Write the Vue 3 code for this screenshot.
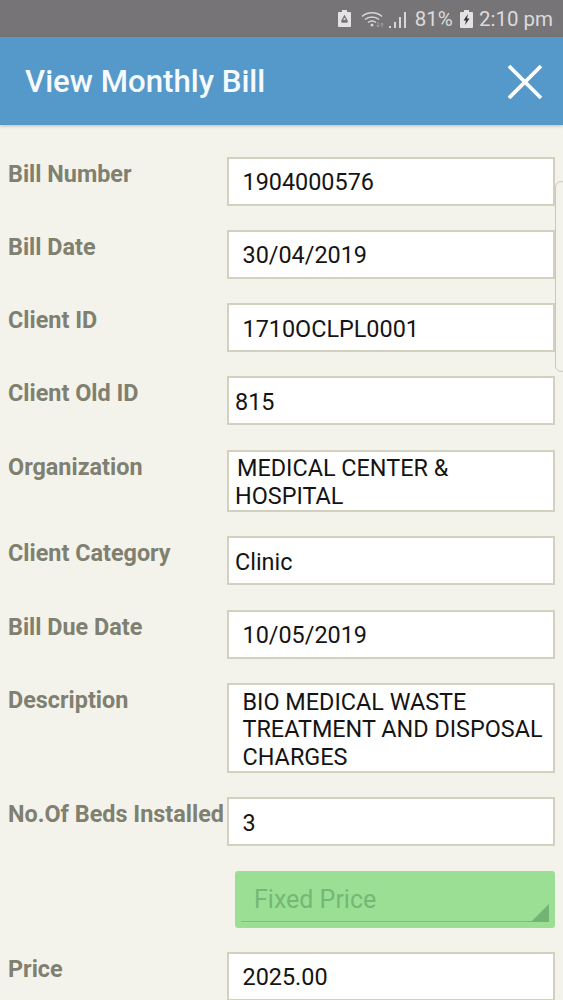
<script setup>
const rows = [
  { label: 'Bill Number', lines: ['1904000576'], pad: 'wide' },
  { label: 'Bill Date', lines: ['30/04/2019'], pad: 'wide' },
  { label: 'Client ID', lines: ['1710OCLPL0001'], pad: 'wide' },
  { label: 'Client Old ID', lines: ['815'], pad: 'narrow' },
  { label: 'Organization', lines: ['MEDICAL CENTER &', 'HOSPITAL'], pad: 'org' },
  { label: 'Client Category', lines: ['Clinic'], pad: 'narrow' },
  { label: 'Bill Due Date', lines: ['10/05/2019'], pad: 'wide' },
  { label: 'Description', lines: ['BIO MEDICAL WASTE', 'TREATMENT AND DISPOSAL', 'CHARGES'], pad: 'wide' },
  { label: 'No.Of Beds Installed', lines: ['3'], pad: 'wide' },
  { kind: 'select', label: '', lines: ['Fixed Price'] },
  { label: 'Price', lines: ['2025.00'], pad: 'wide' }
]
</script>

<template>
  <div class="screen">
    <div class="status">
      <svg class="ic-batt" viewBox="0 0 13 17" width="13" height="17">
        <path d="M4 0h5v2h3a1 1 0 0 1 1 1v13a1 1 0 0 1-1 1H1a1 1 0 0 1-1-1V3a1 1 0 0 1 1-1h3z" fill="#e4e3e4" />
        <path d="M6.500 6 4 10.500h5zM3.500 12h6" fill="none" stroke="#767476" stroke-width="1.300" />
      </svg>
      <svg class="ic-wifi" viewBox="0 0 24 18" width="24" height="18">
        <path d="M1 6.500C6 1.500 16 1.500 21 6.500M4 9.500C8 6 14 6 18 9.500M7 12.500C9.500 10.500 12.500 10.500 15 12.500" fill="none" stroke="#d8d7d8" stroke-width="1.500" />
        <circle cx="11" cy="15" r="1.500" fill="#d8d7d8" />
        <path d="M17 12v5M15.500 15.500 17 17l1.500-1.500M21 17v-4M19.800 14.500 21 13l1.200 1.500" fill="none" stroke="#a3a2a3" stroke-width="1" />
      </svg>
      <svg class="ic-signal" viewBox="0 0 18 17" width="18" height="17">
        <path d="M0 17v-2h2v2zM5 17v-6h2v6zM10 17V6h2v11zM15 17V1h2v16z" fill="#d8d7d8" />
      </svg>
      <span class="pct">81%</span>
      <svg class="ic-charge" viewBox="0 0 13 18" width="13" height="18">
        <path d="M4 0h5v2h3a1 1 0 0 1 1 1v14a1 1 0 0 1-1 1H1a1 1 0 0 1-1-1V3a1 1 0 0 1 1-1h3z" fill="#e4e3e4" />
        <path d="M8 4 3.500 10.500h2.500L5 15l4.500-6.500H7z" fill="#333" />
      </svg>
      <span class="time">2:10 pm</span>
    </div>

    <header class="bar">
      <h1 class="title">View Monthly Bill</h1>
      <svg class="close" viewBox="0 0 36 36" width="36" height="36">
        <path d="M2 2 34 34M34 2 2 34" stroke="#fff" stroke-width="3.800" fill="none" />
      </svg>
    </header>

    <main class="form">
      <div v-for="row in rows" :key="row.label + row.lines[0]" class="row">
        <label class="label">{{ row.label }}</label>
        <div v-if="row.kind === 'select'" class="select">
          <span class="select-text">{{ row.lines[0] }}</span>
          <span class="select-line"></span>
          <span class="select-arrow"></span>
        </div>
        <div v-else class="field" :class="row.pad">
          <span v-for="line in row.lines" :key="line" class="line">{{ line }}</span>
        </div>
      </div>
    </main>

    <div class="handle"></div>
  </div>
</template>

<style scoped>
.screen {
  position: relative;
  width: 563px;
  height: 1000px;
  overflow: hidden;
  background: #f4f3eb;
  font-family: Roboto, "Liberation Sans", sans-serif;
}
.status {
  height: 37px;
  background: #767476;
  display: flex;
  align-items: center;
  padding-right: 10px;
  justify-content: flex-end;
  color: #dcdbdc;
  font-size: 20.500px;
  box-sizing: border-box;
}
.ic-batt { margin-right: 10px; }
.ic-wifi { margin-right: 4px; }
.ic-signal { margin-right: 8px; margin-top: 2px; }
.pct { margin-right: 7px; }
.ic-charge { margin-right: 6px; }
.bar {
  height: 88px;
  background: #5598ca;
  display: flex;
  align-items: center;
  justify-content: space-between;
  padding: 1px 20px 0 25px;
  box-sizing: border-box;
  box-shadow: 0 1px 3px rgba(90, 90, 70, 0.35);
  position: relative;
}
.title {
  margin: 0;
  font-size: 31.200px;
  font-weight: 500;
  color: #f6fafd;
}
.form {
  padding: 31.500px 8px 0;
  display: flex;
  flex-direction: column;
  gap: 24.300px;
}
.row {
  display: flex;
  align-items: flex-start;
}
.label {
  width: 219px;
  flex: none;
  padding-top: 4px;
  font-size: 23.400px;
  line-height: 27px;
  font-weight: 700;
  color: #7f8070;
  white-space: nowrap;
}
.field {
  width: 328px;
  flex: none;
  box-sizing: border-box;
  min-height: 49px;
  background: #fff;
  border: 2px solid #d2d1bf;
  font-size: 23.400px;
  line-height: 27.500px;
  color: #141414;
  padding-top: 3.500px;
  display: flex;
  flex-direction: column;
  justify-content: center;
}
.line { white-space: nowrap; display: block; }
.field.wide { padding-left: 13.500px; }
.field.narrow { padding-left: 6px; }
.field.org { padding-left: 6px; }
.field.org .line:first-child { margin-left: 2px; }
.select {
  position: relative;
  margin-left: 8px;
  width: 320px;
  height: 57px;
  flex: none;
  box-sizing: border-box;
  background: #9bdf94;
  border-radius: 3px;
  padding: 15px 0 0 19px;
}
.select-text {
  font-size: 25px;
  line-height: 28px;
  color: #74b777;
}
.select-line {
  position: absolute;
  left: 6px;
  right: 6px;
  bottom: 6px;
  height: 1px;
  background: #78c07c;
}
.select-arrow {
  position: absolute;
  right: 6px;
  bottom: 6px;
  width: 0;
  height: 0;
  border-style: solid;
  border-width: 0 0 18px 18px;
  border-color: transparent transparent #73b474 transparent;
}
.handle {
  position: absolute;
  left: 555px;
  top: 181px;
  width: 12px;
  height: 191px;
  box-sizing: border-box;
  border: 1px solid #c9c8bb;
  border-radius: 6px;
  background: #f4f3eb;
}
</style>

<style>
html, body { margin: 0; overflow: hidden; }
</style>
